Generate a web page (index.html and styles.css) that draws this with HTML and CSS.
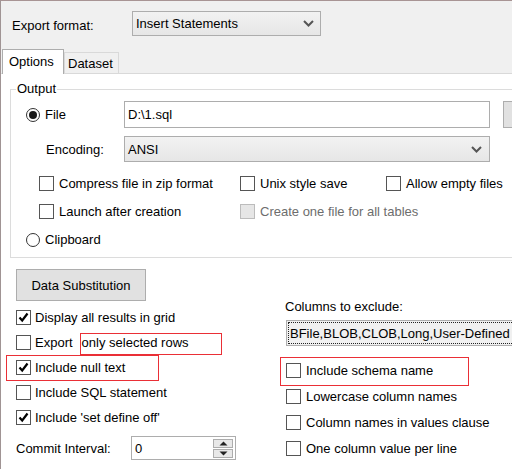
FILE: index.html
```html
<!DOCTYPE html>
<html>
<head>
<meta charset="utf-8">
<link rel="stylesheet" href="styles.css">
</head>
<body>
<div class="win">
  <div class="header">
    <div class="fmt-row">
      <span class="fmt-label">Export format:</span>
      <div class="combo combo-fmt"><span>Insert Statements</span><svg class="chev" width="11" height="7" viewBox="0 0 11 7"><polyline points="1,1 5.5,5.5 10,1" fill="none" stroke="#555" stroke-width="2"/></svg></div>
    </div>
    <div class="tabs">
      <div class="tab active">Options</div>
      <div class="tab">Dataset</div>
    </div>
  </div>
  <div class="panel">
    <fieldset class="group">
      <legend>Output</legend>
      <div class="group-body">
        <div class="line file-line">
          <label class="radio-lbl lbl-col"><span class="radio on"></span>File</label>
          <div class="input file-input">D:\1.sql</div>
          <div class="btn-browse"></div>
        </div>
        <div class="line enc-line">
          <span class="lbl-col enc-label">Encoding:</span>
          <div class="combo combo-enc"><span>ANSI</span><svg class="chev" width="11" height="7" viewBox="0 0 11 7"><polyline points="1,1 5.5,5.5 10,1" fill="none" stroke="#555" stroke-width="2"/></svg></div>
        </div>
        <div class="opts">
          <div class="opt-row">
            <label class="chk c1"><span class="box"></span>Compress file in zip format</label>
            <label class="chk c2"><span class="box"></span>Unix style save</label>
            <label class="chk c3"><span class="box"></span>Allow empty files</label>
          </div>
          <div class="opt-row">
            <label class="chk c1"><span class="box"></span>Launch after creation</label>
            <label class="chk c2 disabled"><span class="box"></span>Create one file for all tables</label>
          </div>
          <div class="opt-row clip-row">
            <label class="radio-lbl"><span class="radio"></span>Clipboard</label>
          </div>
        </div>
      </div>
    </fieldset>

    <div class="bottom">
      <div class="col-left">
        <div class="btn-sub">Data Substitution</div>
        <div class="rows">
          <label class="chk row"><span class="box checked"><svg width="13" height="13" viewBox="0 0 13 13"><polyline points="2.5,6.5 5.2,9.5 10.5,2.5" fill="none" stroke="#000" stroke-width="2.2"/></svg></span>Display all results in grid</label>
          <label class="chk row"><span class="box"></span>Export<span class="mark-sel">only selected rows</span></label>
          <label class="chk row mark-null"><span class="box checked"><svg width="13" height="13" viewBox="0 0 13 13"><polyline points="2.5,6.5 5.2,9.5 10.5,2.5" fill="none" stroke="#000" stroke-width="2.2"/></svg></span>Include null text</label>
          <label class="chk row"><span class="box"></span>Include SQL statement</label>
          <label class="chk row"><span class="box checked"><svg width="13" height="13" viewBox="0 0 13 13"><polyline points="2.5,6.5 5.2,9.5 10.5,2.5" fill="none" stroke="#000" stroke-width="2.2"/></svg></span>Include 'set define off'</label>
          <div class="commit-row">
            <span class="commit-label">Commit Interval:</span>
            <div class="spin">
              <span>0</span>
              <div class="spin-btns">
                <div class="spin-btn"><svg width="9" height="5" viewBox="0 0 9 5"><polygon points="0.5,4.5 4.5,0.5 8.5,4.5" fill="#222"/></svg></div>
                <div class="spin-btn"><svg width="9" height="5" viewBox="0 0 9 5"><polygon points="0.5,0.5 8.5,0.5 4.5,4.5" fill="#222"/></svg></div>
              </div>
            </div>
          </div>
        </div>
      </div>
      <div class="col-right">
        <div class="excl-label">Columns to exclude:</div>
        <div class="excl-input"><div class="excl-inner">BFile,BLOB,CLOB,Long,User-Defined</div></div>
        <div class="rrows">
          <label class="chk rrow mark-schema"><span class="box"></span>Include schema name</label>
          <label class="chk rrow"><span class="box"></span>Lowercase column names</label>
          <label class="chk rrow"><span class="box"></span>Column names in values clause</label>
          <label class="chk rrow"><span class="box"></span>One column value per line</label>
        </div>
      </div>
    </div>
  </div>
</div>
</body>
</html>
```

FILE: styles.css
```css
* { box-sizing: border-box; }
html, body { margin: 0; padding: 0; }
body {
  width: 512px;
  height: 469px;
  overflow: hidden;
  background: #fff;
  font-family: "Liberation Sans", Arial, sans-serif;
  font-size: 13px;
  color: #000;
}
.win {
  width: 512px;
  height: 469px;
  border-top: 1px solid #a89494;
  border-left: 1px solid #a09494;
  overflow: hidden;
}
.header {
  background: #f0f0f0;
  padding-top: 10px;
}
.fmt-row {
  display: flex;
  align-items: center;
  height: 25px;
}
.fmt-label {
  margin-left: 11px;
  width: 120px;
  padding-top: 4px;
}
.combo {
  position: relative;
  display: flex;
  align-items: center;
  height: 25px;
  border: 1px solid #adadad;
  background: linear-gradient(#f2f2f2, #e6e6e6);
  padding-left: 3px;
}
.combo-fmt { width: 189px; }
.chev {
  position: absolute;
  right: 6px;
  top: 8px;
}
.tabs {
  display: flex;
  align-items: flex-end;
  height: 37px;
  padding-left: 1px;
}
.tab {
  height: 21px;
  padding: 0 4px 0 4px;
  display: flex;
  align-items: center;
  border: 1px solid #d9d9d9;
  border-bottom: none;
  background: #f0f0f0;
}
.tab.active {
  position: relative;
  height: 25px;
  margin-bottom: -1px;
  width: 62px;
  padding-left: 6px;
  padding-bottom: 1px;
  background: #fff;
  border-color: #adadad;
}
.tab:not(.active) { width: 55px; padding-left: 3px; }
.panel {
  border-top: 1px solid #d9d9d9;
  background: #fff;
}
.group {
  margin: 7px -40px 0 9px;
  padding: 0;
  min-width: 0;
  border: 1px solid #dcdcdc;
}
.group legend {
  margin-left: 5px;
  padding: 0 1px;
  line-height: 16px;
}
.group-body {
  padding: 4px 0 3px 0;
}
.line {
  display: flex;
  align-items: center;
}
.lbl-col { width: 113px; flex: none; }
.file-line { height: 27px; }
.radio-lbl {
  display: flex;
  align-items: center;
  padding-left: 15px;
}
.radio {
  width: 14px;
  height: 14px;
  border: 1px solid #333;
  border-radius: 50%;
  margin-right: 5px;
  background: #fff;
  display: flex;
  align-items: center;
  justify-content: center;
}
.radio.on::after {
  content: "";
  width: 8px;
  height: 8px;
  border-radius: 50%;
  background: #1a1a1a;
}
.input {
  height: 27px;
  border: 1px solid #adadad;
  background: #fff;
  display: flex;
  align-items: center;
  padding-left: 3px;
}
.file-input { width: 366px; }
.btn-browse {
  margin-left: 13px;
  width: 30px;
  height: 27px;
  border: 1px solid #adadad;
  background: #e1e1e1;
}
.enc-line { margin-top: 8px; height: 26px; }
.enc-label { padding-left: 35px; }
.combo-enc { width: 366px; height: 26px; }
.combo-enc .chev { top: 9px; right: 7px; }
.opts { margin-top: 7px; }
.opt-row {
  position: relative;
  height: 28px;
  display: flex;
  align-items: center;
}
.chk {
  display: flex;
  align-items: center;
  white-space: nowrap;
}
.box {
  width: 15px;
  height: 15px;
  flex: none;
  border: 1px solid #555;
  background: #fff;
  margin-right: 5px;
  display: flex;
  align-items: center;
  justify-content: center;
}
.opt-row .c1 { margin-left: 28px; width: 201px; }
.opt-row .c2 { width: 146px; }
.disabled { color: #6d6d6d; }
.disabled .box { background: #e6e6e6; border-color: #bcbcbc; }
.clip-row { height: 29px; }

.bottom {
  display: flex;
}
.col-left {
  width: 285px;
  flex: none;
  padding: 11px 0 0 15px;
}
.btn-sub {
  width: 130px;
  height: 32px;
  border: 1px solid #adadad;
  background: #e1e1e1;
  display: flex;
  align-items: center;
  justify-content: center;
}
.rows { margin-top: 4px; }
.row {
  position: relative;
  height: 25px;
}
.row .box { margin-right: 4px; }
.mark-sel { position: relative; margin-left: 9px; }
.mark-sel::after {
  content: "";
  position: absolute;
  left: -2px;
  top: -2px;
  width: 140px;
  height: 20px;
  border: 1px solid #ea2f36;
}
.mark-null::after {
  content: "";
  position: absolute;
  left: -10px;
  top: 0;
  width: 151px;
  height: 24px;
  border: 1px solid #ea2f36;
}
.commit-row {
  display: flex;
  align-items: center;
  margin-top: 6px;
  height: 24px;
}
.commit-label { width: 115px; }
.spin {
  position: relative;
  width: 105px;
  height: 24px;
  border: 1px solid #adadad;
  display: flex;
  align-items: center;
  padding-left: 3px;
}
.spin-btns {
  position: absolute;
  right: 2px;
  top: 2px;
  width: 20px;
  display: flex;
  flex-direction: column;
  gap: 1px;
}
.spin-btn {
  height: 9px;
  border: 1px solid #adadad;
  background: #e8e8e8;
  display: flex;
  align-items: center;
  justify-content: center;
}
.col-right {
  flex: 1;
  padding-top: 41px;
  min-width: 0;
}
.excl-label { line-height: 16px; margin-left: -1px; }
.excl-input {
  margin-top: 5px;
  width: 240px;
  height: 26px;
  border: 1px solid #adadad;
  background: #f0f0f0;
  padding: 1px;
}
.excl-inner {
  height: 100%;
  border: 1px dotted #222;
  padding-left: 1px;
  display: flex;
  align-items: center;
  white-space: nowrap;
}
.rrows { margin-top: 11px; }
.rrow {
  position: relative;
  height: 26px;
}
.mark-schema::after {
  content: "";
  position: absolute;
  left: -6px;
  top: 0;
  width: 187px;
  height: 27px;
  border: 1px solid #ea2f36;
}
```
